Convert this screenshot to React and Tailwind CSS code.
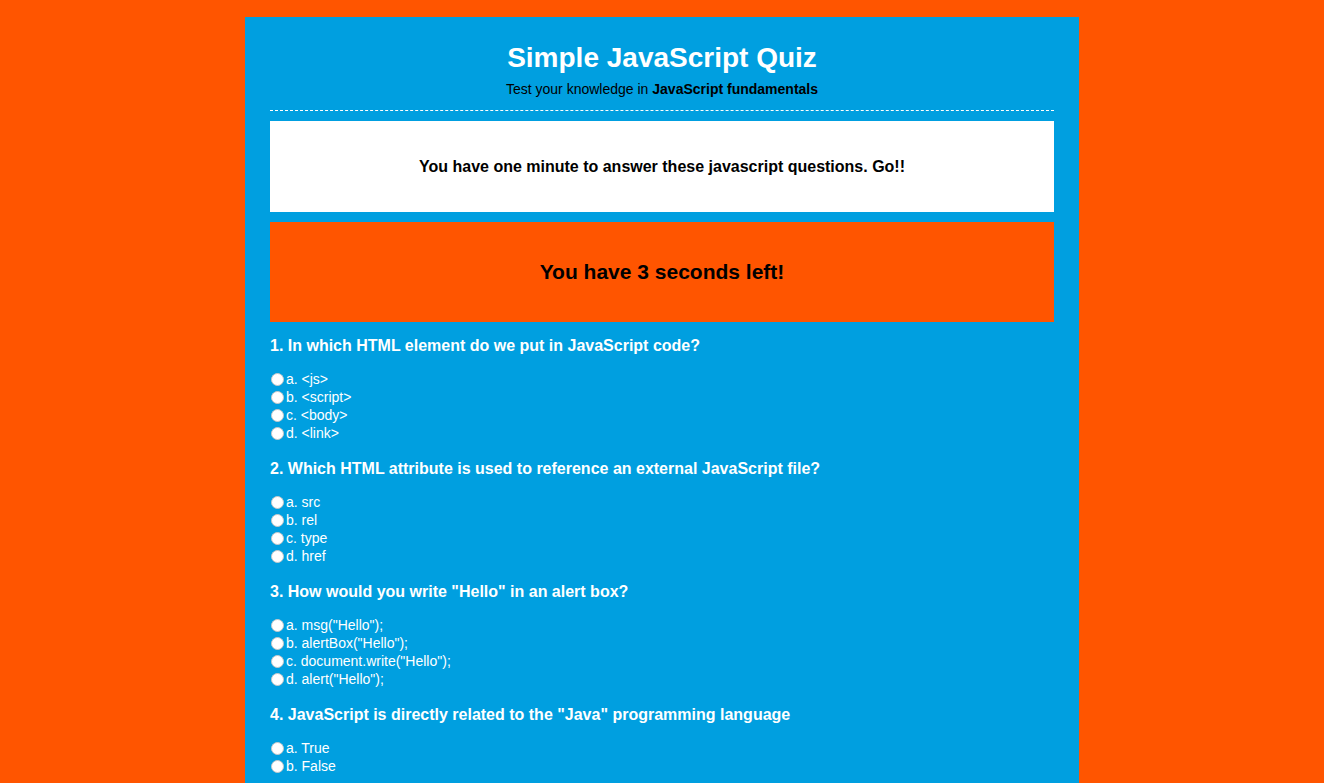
import React, { useState } from 'react';

const questions = [
  {
    title: '1. In which HTML element do we put in JavaScript code?',
    options: ['a. <js>', 'b. <script>', 'c. <body>', 'd. <link>'],
  },
  {
    title: '2. Which HTML attribute is used to reference an external JavaScript file?',
    options: ['a. src', 'b. rel', 'c. type', 'd. href'],
  },
  {
    title: '3. How would you write "Hello" in an alert box?',
    options: ['a. msg("Hello");', 'b. alertBox("Hello");', 'c. document.write("Hello");', 'd. alert("Hello");'],
  },
  {
    title: '4. JavaScript is directly related to the "Java" programming language',
    options: ['a. True', 'b. False'],
  },
];

const Question = ({ index, title, options, answer, onPick }) => (
  <div className="flex flex-col">
    <h3 className="text-[16px] leading-[18px] font-bold text-white">{title}</h3>
    <div className="mt-[15px] flex flex-col">
      {options.map((opt, i) => (
        <label key={opt} className="flex items-center h-[18px] text-[14px] text-white cursor-pointer">
          <input
            type="radio"
            name={`q${index}`}
            checked={answer === i}
            onChange={() => onPick(i)}
            className="appearance-none m-0 ml-px mr-[2px] w-[13px] h-[13px] rounded-full bg-white border border-[#c9c9c9] checked:border-[4px] checked:border-[#1a73e8]"
          />
          <span>{opt}</span>
        </label>
      ))}
    </div>
  </div>
);

const App = () => {
  const [answers, setAnswers] = useState({});

  return (
    <div className="min-h-screen bg-[#ff5500] pt-[17px] font-['Liberation_Sans',Arial,sans-serif]">
      <div className="w-[834px] mx-auto bg-[#009fe0] px-[25px] pt-[25px] pb-[30px]">
        {/* Header */}
        <header className="flex flex-col items-center border-b border-dashed border-white pb-[13px]">
          <h1 className="text-[28px] leading-[32px] font-bold text-white">Simple JavaScript Quiz</h1>
          <p className="mt-[7px] text-[14px] leading-[16px] text-black">
            Test your knowledge in <strong>JavaScript fundamentals</strong>
          </p>
        </header>

        <div className="mt-[10px] h-[91px] bg-white flex items-center justify-center">
          <p className="text-[16px] font-bold text-black">You have one minute to answer these javascript questions. Go!!</p>
        </div>

        <div className="mt-[10px] h-[100px] bg-[#ff5500] flex items-center justify-center">
          <p className="text-[21px] font-bold text-black">You have 3 seconds left!</p>
        </div>

        <div className="mt-[15px] flex flex-col gap-[18px]">
          {questions.map((q, i) => (
            <Question
              key={i}
              index={i}
              title={q.title}
              options={q.options}
              answer={answers[i]}
              onPick={(v) => setAnswers({ ...answers, [i]: v })}
            />
          ))}
        </div>
      </div>
    </div>
  );
};

export default App;
